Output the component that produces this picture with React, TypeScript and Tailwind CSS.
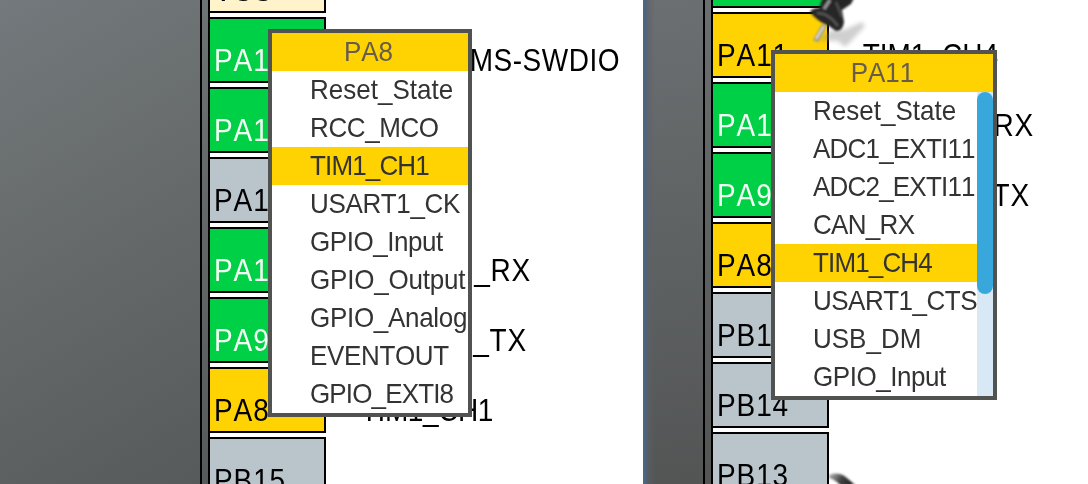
import React from "react";

type Pin = { name: string; color: string; signal?: string; signalClass?: string };
type Item = [label: string, tracking: string];

const GREEN = "bg-[#00d045] text-[#f2fff4]";
const GOLD = "bg-[#ffd202] text-black";
const GRAY = "bg-[#b9c4cb] text-black";
const CREAM = "bg-[#fff3cc] text-black";

const leftPins: Pin[] = [
  { name: "VSS", color: CREAM },
  { name: "PA13", color: GREEN, signal: "SYS_JTMS-SWDIO", signalClass: "right-[-296px] tracking-[0.5px]" },
  { name: "PA12", color: GREEN },
  { name: "PA11", color: GRAY },
  { name: "PA10", color: GREEN, signal: "USART1_RX", signalClass: "right-[-207px] tracking-[0.8px]" },
  { name: "PA9", color: GREEN, signal: "USART1_TX", signalClass: "right-[-203px] tracking-[0.8px]" },
  { name: "PA8", color: GOLD, signal: "TIM1_CH1", signalClass: "right-[-169px] tracking-[-0.4px]" },
  { name: "PB15", color: GRAY },
];

const rightPins: Pin[] = [
  { name: "PA12", color: GREEN },
  { name: "PA11", color: GOLD, signal: "TIM1_CH4", signalClass: "right-[-171px] tracking-[0px]" },
  { name: "PA10", color: GREEN, signal: "USART1_RX", signalClass: "right-[-207px] tracking-[0.8px]" },
  { name: "PA9", color: GREEN, signal: "USART1_TX", signalClass: "right-[-203px] tracking-[0.8px]" },
  { name: "PA8", color: GOLD },
  { name: "PB15", color: GRAY },
  { name: "PB14", color: GRAY },
  { name: "PB13", color: GRAY },
];

const leftItems: Item[] = [
  ["Reset_State", "tracking-[0px]"],
  ["RCC_MCO", "tracking-[-0.4px]"],
  ["TIM1_CH1", "tracking-[-0.85px]"],
  ["USART1_CK", "tracking-[-0.35px]"],
  ["GPIO_Input", "tracking-[-0.45px]"],
  ["GPIO_Output", "tracking-[-0.2px]"],
  ["GPIO_Analog", "tracking-[-0.3px]"],
  ["EVENTOUT", "tracking-[-0.35px]"],
  ["GPIO_EXTI8", "tracking-[-0.85px]"],
];

const rightItems: Item[] = [
  ["Reset_State", "tracking-[0px]"],
  ["ADC1_EXTI11", "tracking-[-0.8px]"],
  ["ADC2_EXTI11", "tracking-[-0.8px]"],
  ["CAN_RX", "tracking-[-0.7px]"],
  ["TIM1_CH4", "tracking-[-0.85px]"],
  ["USART1_CTS", "tracking-[-0.5px]"],
  ["USB_DM", "tracking-[0px]"],
  ["GPIO_Input", "tracking-[-0.45px]"],
];

function PinColumn({ pins, offset }: { pins: Pin[]; offset: string }) {
  return (
    <div className={`flex w-[116px] shrink-0 flex-col gap-1 ${offset}`}>
      {pins.map((pin) => (
        <div key={pin.name} className={`relative h-[66px] shrink-0 border-y-2 border-r-2 border-black pl-1 pt-[24px] ${pin.color}`}>
          <div className="origin-[0_26px] scale-y-[1.14] whitespace-nowrap text-[28px] leading-[38px] tracking-[0.9px]">{pin.name}</div>
          {pin.signal && (
            <span className={`absolute top-[24px] origin-[0_26px] scale-y-[1.14] whitespace-nowrap text-[28px] leading-[38px] text-black ${pin.signalClass}`}>
              {pin.signal}
            </span>
          )}
        </div>
      ))}
    </div>
  );
}

function Menu({ title, items, selected, place, scroll }: { title: string; items: Item[]; selected: string; place: string; scroll?: boolean }) {
  return (
    <div className={`absolute flex flex-col border-4 border-[#515351] bg-white text-[26px] leading-[38px] text-[#333] ${place}`}>
      <div className="h-[38px] bg-[#ffd202] pr-[3px] text-center text-[#665c4c]">
        <div className="origin-[0_28px] scale-y-[1.07]">{title}</div>
      </div>
      <div className="flex">
        <div className="min-w-0 flex-1">
          {items.map(([label, tracking]) => (
            <div key={label} className={`h-[38px] whitespace-nowrap pl-[38px] ${tracking} ${label === selected ? "bg-[#ffd202]" : ""}`}>
              <div className="origin-[0_28px] scale-y-[1.07]">{label}</div>
            </div>
          ))}
        </div>
        {scroll && (
          <div className="w-4 shrink-0 bg-[#d9e8f5]">
            <div className="h-[202px] rounded-full bg-[#38a8dc]" />
          </div>
        )}
      </div>
    </div>
  );
}

function Pushpin() {
  return (
    <svg className="absolute left-[157px] top-0" width="80" height="50" viewBox="0 0 80 50">
      <defs>
        <filter id="soft" x="-20%" y="-20%" width="140%" height="140%">
          <feGaussianBlur stdDeviation="1" />
        </filter>
        <filter id="shade" x="-20%" y="-20%" width="140%" height="140%">
          <feGaussianBlur stdDeviation="2" />
        </filter>
      </defs>
      <path d="M16 40 L32 30 L44 30 L62 22 L65 26 L54 38 L45 47 L38 41 Z" fill="#888" opacity="0.4" filter="url(#shade)" />
      <g filter="url(#soft)">
        <path d="M13 40 L22 24 L27 26 L18 42 Z" fill="#99968a" />
        <path d="M16 39 L24 26" stroke="#e2e2dc" strokeWidth="2" />
        <path d="M22 -4 L55 -4 L51 4 L42 10 L44 22 Q43 31 36 31 L29 26 Q18 22 10 12 Q12 8 19 8 L22 0 Z" fill="#262626" />
        <path d="M17 13 Q29 13 38 26" stroke="#555" strokeWidth="2.5" fill="none" />
        <path d="M30 0 L24 9" stroke="#999" strokeWidth="3" />
        <path d="M36 2 L42 17" stroke="#484848" strokeWidth="3" />
      </g>
    </svg>
  );
}

function PinHead() {
  return (
    <svg className="absolute left-[186px] top-[470px]" width="28" height="14" viewBox="0 0 28 14">
      <defs>
        <linearGradient id="head" x1="0" y1="0" x2="1" y2="0.3">
          <stop offset="0" stopColor="#bbb" />
          <stop offset="0.55" stopColor="#444" />
          <stop offset="1" stopColor="#222" />
        </linearGradient>
      </defs>
      <path d="M0 5 Q10 1 18 8 L26 15 L12 16 Q7 10 0 8 Z" fill="url(#head)" filter="url(#soft)" />
    </svg>
  );
}

export default function App() {
  return (
    <div className="flex h-[484px] w-[1088px] overflow-hidden bg-white font-['Liberation_Sans',Arial,sans-serif] [font-kerning:none]">
      <section className="relative flex h-[484px] w-[643px] shrink-0 overflow-hidden">
        <div className="flex w-[210px] shrink-0 bg-[linear-gradient(150deg,#73797c_0%,#656969_50%,#575a5b_100%)]">
          <div className="ml-[200px] w-[10px] border-x-2 border-black" />
        </div>
        <PinColumn pins={leftPins} offset="mt-[-53px]" />
        <Menu title="PA8" items={leftItems} selected="TIM1_CH1" place="left-[268px] top-[29px] h-[388px] w-[204px]" />
      </section>
      <section className="relative flex h-[484px] w-[445px] shrink-0 overflow-hidden">
        <div className="flex w-[70px] shrink-0 bg-[linear-gradient(90deg,#466a98_0px,#4c647f_2px,#59616a99_5px,transparent_12px),linear-gradient(175deg,#6b6f71,#535555)]">
          <div className="ml-[60px] w-[10px] border-x-2 border-black" />
        </div>
        <PinColumn pins={rightPins} offset="mt-[-58px]" />
        <Pushpin />
        <PinHead />
        <Menu title="PA11" items={rightItems} selected="TIM1_CH4" place="left-[128px] top-[50px] h-[350px] w-[226px]" scroll />
      </section>
    </div>
  );
}
